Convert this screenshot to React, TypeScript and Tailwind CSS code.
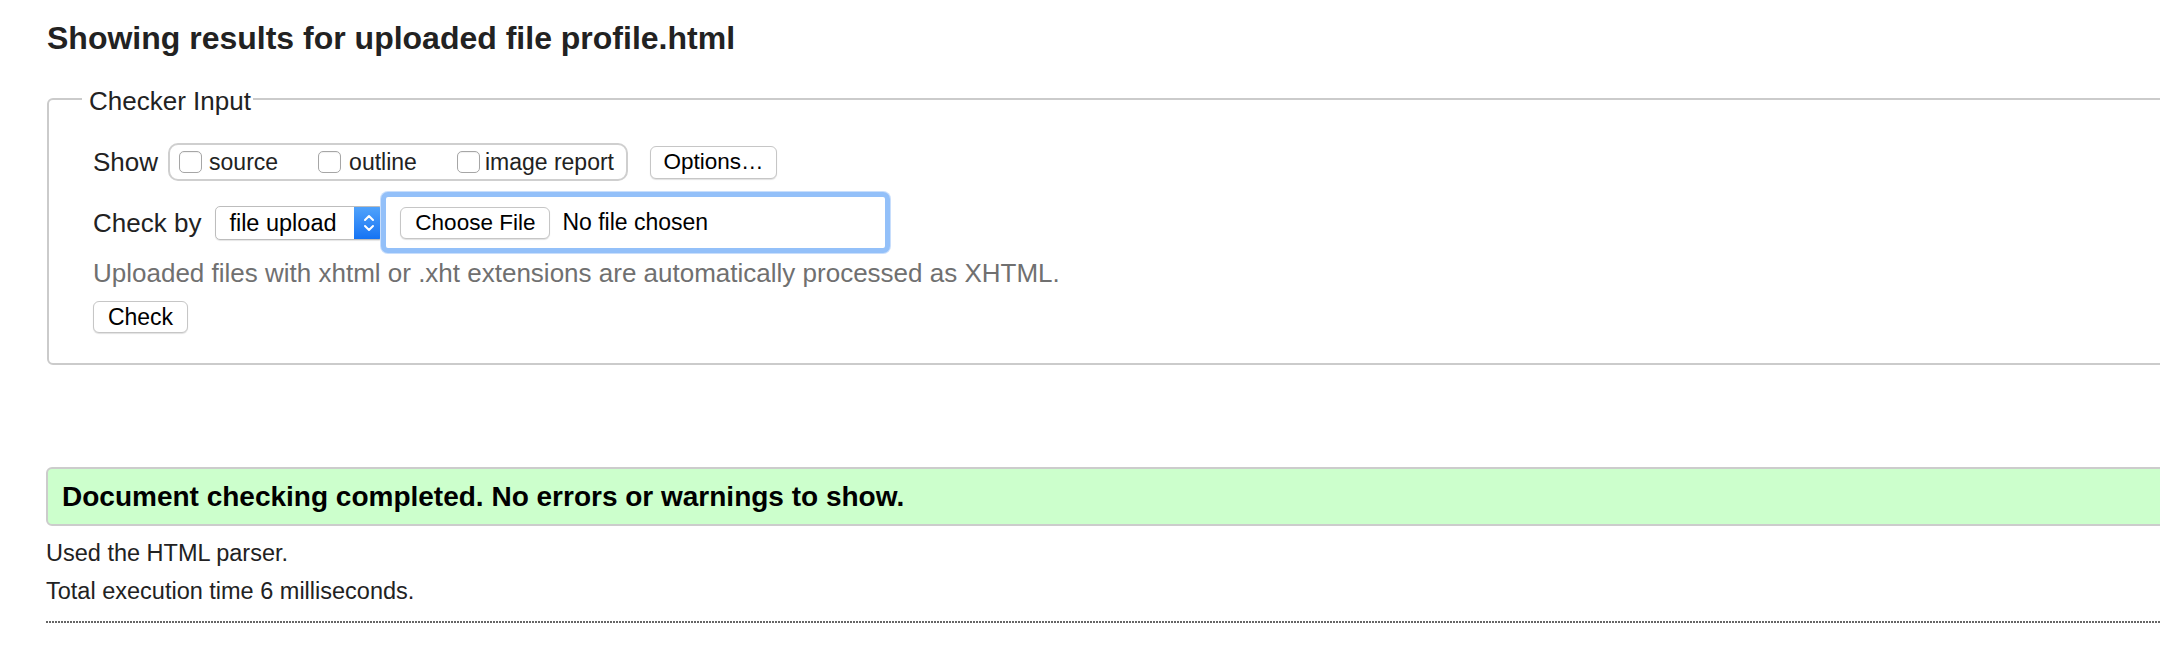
import React from 'react'

const Checkbox = ({ className = '' }: { className?: string }) => (
  <span
    className={`block shrink-0 w-[23px] h-[22px] rounded-[5px] border border-[#a6a6a6] bg-white shadow-[inset_0_1px_1px_rgba(0,0,0,0.06)] ${className}`}
  />
)

const Button = ({ children, className = '' }: { children: React.ReactNode; className?: string }) => (
  <button
    type="button"
    className={`flex items-center justify-center bg-white border border-[#c6c6c6] rounded-[6px] shadow-[0_1px_1px_rgba(0,0,0,0.12)] text-black ${className}`}
  >
    {children}
  </button>
)

export default function App() {
  return (
    <div className="w-[2160px] h-[650px] overflow-hidden bg-white font-['Liberation_Sans',Arial,sans-serif] text-[#222]">
      <div className="w-[2400px]">
        {/* Heading */}
        <h2 className="ml-[47px] pt-[18px] text-[32px] leading-[40px] font-bold text-[#222]">
          Showing results for uploaded file profile.html
        </h2>

        {/* Checker input */}
        <fieldset className="mt-[26px] ml-[47px] border-2 border-[#cbcbcb] rounded-[6px] pb-[30px]">
          <legend className="ml-[33px] pt-[4px] pl-[7px] pr-[2px] text-[26px] leading-[26px] text-[#222]">
            Checker Input
          </legend>
          <div className="pl-[44px] pt-[29px]">
            {/* Show row */}
            <div className="flex items-center h-[38px]">
              <span className="text-[26px] leading-[30px] mr-[10px]">Show</span>
              <div className="flex items-center h-[38px] border-2 border-[#cfcfcf] rounded-[10px] pl-[9px] pr-[12px] text-[23px] leading-[28px]">
                <Checkbox />
                <span className="ml-[7px]">source</span>
                <Checkbox className="ml-[40px]" />
                <span className="ml-[8px]">outline</span>
                <Checkbox className="ml-[40px]" />
                <span className="ml-[5px]">image report</span>
              </div>
              <Button className="ml-[22px] w-[127px] h-[33px] text-[22.5px]">Options…</Button>
            </div>

            {/* Check by row */}
            <div className="mt-[11px] flex items-center h-[61px]">
              <span className="text-[26px] leading-[30px] mr-[14px]">Check by</span>
              <div className="flex w-[169px] h-[34px] rounded-[5px] border border-[#bdbdbd] bg-white overflow-hidden shadow-[0_1px_1px_rgba(0,0,0,0.1)]">
                <span className="flex-1 pl-[13px] text-[23.5px] leading-[32px] text-black">file upload</span>
                <span className="w-[29px] flex items-center justify-center bg-gradient-to-b from-[#4fa2fb] to-[#1473f3]">
                  <svg width="12" height="20" viewBox="0 0 12 20" fill="none" stroke="white" strokeWidth="2" strokeLinecap="round" strokeLinejoin="round">
                    <path d="M2 7 L6 3 L10 7" />
                    <path d="M2 13 L6 17 L10 13" />
                  </svg>
                </span>
              </div>
              <div className="ml-[-3px] w-[509px] h-[61px] flex items-center pl-[14px] bg-white border-[5px] border-[#93c0f9] rounded-[7px] shadow-[0_0_0_1px_#c8defc]">
                <Button className="w-[150px] h-[32px] text-[22.5px]">Choose File</Button>
                <span className="ml-[12px] text-[23px] text-black">No file chosen</span>
              </div>
            </div>

            <p className="mt-[5px] text-[26px] leading-[30px] text-[#707070]">
              Uploaded files with xhtml or .xht extensions are automatically processed as XHTML.
            </p>

            <Button className="mt-[13px] w-[95px] h-[32px] text-[23px]">Check</Button>
          </div>
        </fieldset>

        {/* Result */}
        <div className="mt-[102px] ml-[46px] h-[59px] flex items-center pl-[14px] bg-[#ccffcc] border-2 border-[#cccccc] rounded-[6px] text-[28px] font-bold text-black">
          Document checking completed. No errors or warnings to show.
        </div>

        <div className="ml-[46px] mt-[12px] flex flex-col gap-[8px] text-[23.5px] leading-[30px] text-[#222]">
          <p>Used the HTML parser.</p>
          <p>Total execution time 6 milliseconds.</p>
        </div>

        <div className="ml-[46px] mt-[15px] h-[2px] bg-[image:repeating-linear-gradient(to_right,#666_0px,#666_2px,transparent_2px,transparent_3px)]" />
      </div>
    </div>
  )
}
